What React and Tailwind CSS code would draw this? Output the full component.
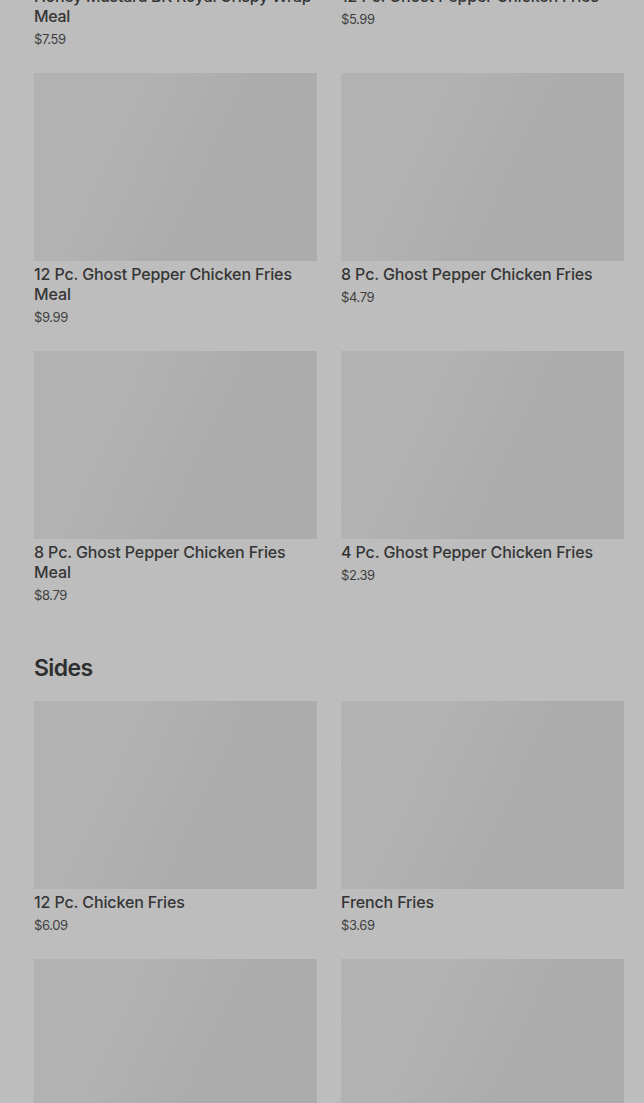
const sections = [
  {
    title: null,
    items: [
      { name: "Honey Mustard BK Royal Crispy Wrap Meal", price: "$7.59", tight: true },
      { name: "12 Pc. Ghost Pepper Chicken Fries", price: "$5.99" },
      { name: "12 Pc. Ghost Pepper Chicken Fries Meal", price: "$9.99" },
      { name: "8 Pc. Ghost Pepper Chicken Fries", price: "$4.79" },
      { name: "8 Pc. Ghost Pepper Chicken Fries Meal", price: "$8.79" },
      { name: "4 Pc. Ghost Pepper Chicken Fries", price: "$2.39" },
    ],
  },
  {
    title: "Sides",
    items: [
      { name: "12 Pc. Chicken Fries", price: "$6.09" },
      { name: "French Fries", price: "$3.69" },
      { name: "Onion Rings", price: "$3.29" },
      { name: "Mozzarella Sticks", price: "$3.49" },
    ],
  },
];

const MenuCard = ({ item }) => (
  <div className="flex flex-col">
    <div className="h-[188px] w-full bg-linear-115 from-[#b2b2b2] from-30% to-[#acacac] to-60%" />
    <div
      className={
        "mt-[3px] text-[16px] leading-[20px] font-medium text-[#353535] " +
        (item.tight ? "tracking-[-0.3px]" : "tracking-[-0.12px]")
      }
    >
      {item.name}
    </div>
    <div className="mt-[3px] text-[13px] leading-[20px] tracking-[-0.4px] text-[#3f3f3f]">
      {item.price}
    </div>
  </div>
);

const App = () => {
  return (
    <div
      className="h-[1103px] w-full overflow-hidden bg-[#bdbdbd]"
      style={{ fontFamily: "Inter, 'Noto Sans', sans-serif" }}
    >
      <div className="-mt-[205px] pl-[34px] pr-[20px]">
        {sections.map((section, i) => (
          <div key={i} className={i > 0 ? "mt-[47px]" : ""}>
            {section.title && (
              <h2 className="mb-[17px] text-[23px] leading-[32px] font-semibold tracking-[-0.6px] text-[#2e2e2e]">
                {section.title}
              </h2>
            )}
            <div className="grid grid-cols-2 gap-x-[24px] gap-y-[24px]">
              {section.items.map((item) => (
                <MenuCard key={item.name} item={item} />
              ))}
            </div>
          </div>
        ))}
      </div>
    </div>
  );
};

export default App;
